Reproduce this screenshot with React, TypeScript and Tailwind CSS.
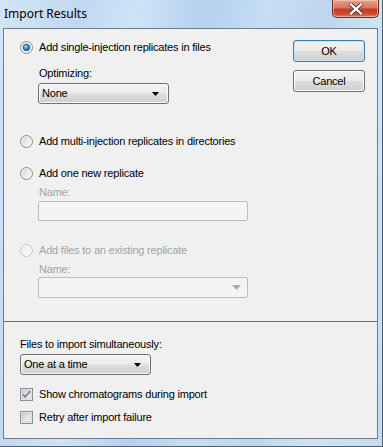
import React, { useId } from 'react';

function Radio({ checked = false, disabled = false }: { checked?: boolean; disabled?: boolean }) {
    const id = useId();
    return (
        <svg width="13" height="13" viewBox="0 0 13 13" className="shrink-0">
            <defs>
                <linearGradient id={`${id}f`} x1="0" y1="0" x2="1" y2="1">
                    <stop offset="0" stopColor={disabled ? '#ececec' : '#d4d4d4'} />
                    <stop offset="1" stopColor={disabled ? '#fbfbfb' : '#ffffff'} />
                </linearGradient>
                <radialGradient id={`${id}d`} cx="0.4" cy="0.35" r="0.7">
                    <stop offset="0" stopColor="#a6e0fb" />
                    <stop offset="0.5" stopColor="#2a92d3" />
                    <stop offset="1" stopColor="#0a4f8a" />
                </radialGradient>
            </defs>
            <circle cx="6.5" cy="6.5" r="6" fill={disabled ? '#f4f4f4' : '#f6f6f6'} stroke={disabled ? '#c9c9c9' : '#8a8a8a'} />
            <circle cx="6.5" cy="6.5" r="4.6" fill={`url(#${id}f)`} />
            {checked && <circle cx="6.5" cy="6.5" r="3.3" fill={`url(#${id}d)`} stroke="#1b4f7d" strokeWidth="0.7" />}
        </svg>
    );
}

function Check({ checked = false }: { checked?: boolean }) {
    const id = useId();
    return (
        <svg width="13" height="13" viewBox="0 0 13 13" className="shrink-0">
            <defs>
                <linearGradient id={`${id}g`} x1="0" y1="0" x2="1" y2="1">
                    <stop offset="0" stopColor="#cfcfcf" />
                    <stop offset="1" stopColor="#f7f7f7" />
                </linearGradient>
            </defs>
            <rect x="0.5" y="0.5" width="12" height="12" fill="#f4f4f4" stroke="#8e8f8f" />
            <rect x="2" y="2" width="9" height="9" fill={`url(#${id}g)`} stroke="#b5b5b5" strokeWidth="0.6" />
            {checked && (
                <path d="M3 6.3 L5.3 9 L10 3.2" fill="none" stroke="#6f7ea6" strokeWidth="1.6" strokeLinejoin="round" />
            )}
        </svg>
    );
}

function DropDown({ value, width }: { value: string; width: string }) {
    return (
        <div
            className={`${width} h-[21px] flex items-center justify-between pl-[3px] pr-[9px] rounded-[3px] border border-[#707070] bg-[linear-gradient(180deg,#f4f4f4_0%,#ebebeb_48%,#dddddd_52%,#d0d0d0_100%)] shadow-[inset_0_0_0_1px_#f8f8f8] text-black`}
        >
            <span>{value}</span>
            <svg width="7" height="4" viewBox="0 0 7 4">
                <path d="M0 0 H7 L3.5 4 Z" fill="#000" />
            </svg>
        </div>
    );
}

function Button({ label, primary = false }: { label: string; primary?: boolean }) {
    return (
        <div
            className={`w-[72px] h-[22px] flex items-center justify-center rounded-[3px] border ${primary ? 'border-[#3c7fb1] shadow-[inset_0_0_0_1px_#c2e4f6]' : 'border-[#707070] shadow-[inset_0_0_0_1px_#fbfbfb]'} bg-[linear-gradient(180deg,#f2f2f2_0%,#ebebeb_48%,#dddddd_52%,#cfcfcf_100%)] text-black`}
        >
            {label}
        </div>
    );
}

export default function App() {
    return (
        <div className="w-[383px] h-[447px] flex flex-col font-['Liberation_Sans',Arial,sans-serif] text-[11px] leading-none tracking-[-0.2px] bg-[linear-gradient(100deg,#d2e5f8_0%,#c0d8f1_18%,#cfe3f7_30%,#b4d1ee_45%,#c6ddf5_58%,#bdd6f0_72%,#d0e4f8_85%,#c3dbf3_100%)] border-r border-b border-[#4d5f70]">
            {/* title bar */}
            <div className="h-[28px] flex items-start justify-between shrink-0">
                <span className="pl-[4px] pt-[8px] text-[12px] tracking-normal text-black font-['Noto_Sans',sans-serif] leading-none">Import Results</span>
                <div className="mr-[3px] w-[47px] h-[18px] flex items-center justify-center rounded-b-[5px] border border-t-0 border-[#6d2a20] bg-[linear-gradient(180deg,#e6a391_0%,#d9735e_45%,#c23c22_55%,#cc4a2f_80%,#e07b5f_100%)] shadow-[inset_0_0_0_1px_rgba(255,210,195,0.55)]">
                    <svg width="14" height="12" viewBox="0 0 14 12">
                        <path d="M2 1.5 L12 10.5 M12 1.5 L2 10.5" stroke="#5a3b36" strokeWidth="4" strokeLinecap="square" />
                        <path d="M2 1.5 L12 10.5 M12 1.5 L2 10.5" stroke="#ffffff" strokeWidth="2.3" strokeLinecap="square" />
                    </svg>
                </div>
            </div>

            {/* client area */}
            <div className="ml-[3px] w-[375px] h-[411px] border border-[#6f7d8b] bg-[#f0f0f0] flex flex-col text-black">
                <div className="h-[293px] border-b border-[#6e6e6e] flex">
                    <div className="flex-1 flex flex-col pl-[16px]">
                        <div className="mt-[10px] h-[17px] flex items-center gap-[6px]">
                            <Radio checked />
                            <span>Add single-injection replicates in files</span>
                        </div>
                        <div className="mt-[9px] ml-[19px] h-[16px] flex items-center">Optimizing:</div>
                        <div className="mt-[2px] ml-[18px]">
                            <DropDown value="None" width="w-[131px]" />
                        </div>

                        <div className="mt-[29px] h-[17px] flex items-center gap-[6px]">
                            <Radio />
                            <span>Add multi-injection replicates in directories</span>
                        </div>

                        <div className="mt-[15px] h-[17px] flex items-center gap-[6px]">
                            <Radio />
                            <span>Add one new replicate</span>
                        </div>
                        <div className="mt-[2px] ml-[19px] h-[16px] flex items-center text-[#a3a3a3]">Name:</div>
                        <div className="mt-[1px] ml-[18px] w-[210px] h-[20px] border border-[#b9bdc1] rounded-[2px] bg-[#f4f4f4]" />

                        <div className="mt-[21px] h-[17px] flex items-center gap-[6px] text-[#a3a3a3]">
                            <Radio disabled />
                            <span>Add files to an existing replicate</span>
                        </div>
                        <div className="mt-[2px] ml-[19px] h-[16px] flex items-center text-[#a3a3a3]">Name:</div>
                        <div className="ml-[18px] w-[210px] h-[21px] flex items-center justify-end pr-[6px] border border-[#b9bdc1] rounded-[2px] bg-[#f4f4f4]">
                            <svg width="9" height="5" viewBox="0 0 9 5">
                                <path d="M0 0 H9 L4.5 5 Z" fill="#adadad" />
                            </svg>
                        </div>
                    </div>

                    <div className="flex flex-col gap-[8px] pt-[11px] pr-[12px]">
                        <Button label="OK" primary />
                        <Button label="Cancel" />
                    </div>
                </div>

                <div className="flex-1 flex flex-col pl-[16px]">
                    <div className="mt-[14px] h-[16px] flex items-center">Files to import simultaneously:</div>
                    <div className="mt-[2px]">
                        <DropDown value="One at a time" width="w-[131px]" />
                    </div>
                    <div className="mt-[11px] h-[16px] flex items-center gap-[6px]">
                        <Check checked />
                        <span>Show chromatograms during import</span>
                    </div>
                    <div className="mt-[7px] h-[16px] flex items-center gap-[6px]">
                        <Check />
                        <span>Retry after import failure</span>
                    </div>
                </div>
            </div>
        </div>
    );
}
